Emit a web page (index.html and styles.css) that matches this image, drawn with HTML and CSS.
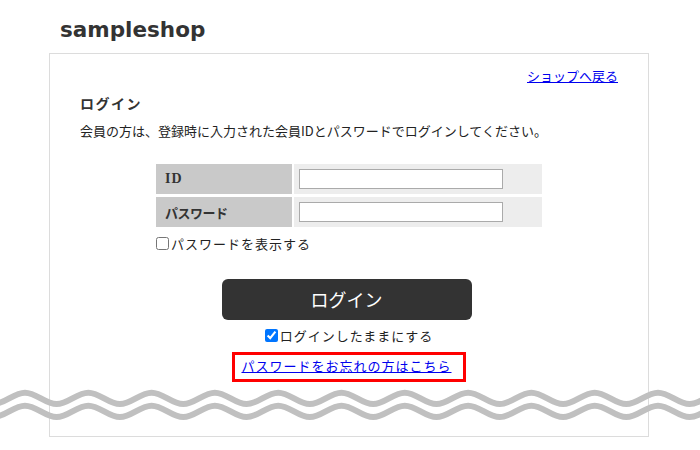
FILE: index.html
```html
<!DOCTYPE html>
<html lang="ja">
<head>
<meta charset="utf-8">
<title>sampleshop ログイン</title>
<link rel="stylesheet" href="styles.css">
</head>
<body>
<div class="page">
  <h1 class="site-title">sampleshop</h1>
  <div class="panel">
    <div class="back"><a href="#">ショップへ戻る</a></div>
    <h2 class="heading">ログイン</h2>
    <p class="lead">会員の方は、登録時に入力された会員IDとパスワードでログインしてください。</p>
    <div class="form">
      <div class="grid">
        <div class="label"><span class="latin">ID</span></div>
        <div class="field"><input type="text"></div>
        <div class="label"><span class="kana">パスワード</span></div>
        <div class="field"><input type="password"></div>
      </div>
      <label class="check"><input type="checkbox"><span>パスワードを表示する</span></label>
    </div>
    <div class="actions">
      <button class="submit" type="button">ログイン</button>
      <label class="check remember"><input type="checkbox" checked><span>ログインしたままにする</span></label>
      <a class="forgot" href="#">パスワードをお忘れの方はこちら</a>
    </div>
  </div>
</div>
<svg class="waves" width="700" height="50" viewBox="0 0 700 50" aria-hidden="true">
  <path fill="none" stroke="#c0c0c0" stroke-width="6" d="M-38.3 12.7 c11.4 0 20.25 11.3 31.65 11.3 s20.25 -11.3 31.65 -11.3 s20.25 11.3 31.65 11.3 s20.25 -11.3 31.65 -11.3 s20.25 11.3 31.65 11.3 s20.25 -11.3 31.65 -11.3 s20.25 11.3 31.65 11.3 s20.25 -11.3 31.65 -11.3 s20.25 11.3 31.65 11.3 s20.25 -11.3 31.65 -11.3 s20.25 11.3 31.65 11.3 s20.25 -11.3 31.65 -11.3 s20.25 11.3 31.65 11.3 s20.25 -11.3 31.65 -11.3 s20.25 11.3 31.65 11.3 s20.25 -11.3 31.65 -11.3 s20.25 11.3 31.65 11.3 s20.25 -11.3 31.65 -11.3 s20.25 11.3 31.65 11.3 s20.25 -11.3 31.65 -11.3 s20.25 11.3 31.65 11.3 s20.25 -11.3 31.65 -11.3 s20.25 11.3 31.65 11.3 s20.25 -11.3 31.65 -11.3 s20.25 11.3 31.65 11.3"/>
  <path fill="none" stroke="#c0c0c0" stroke-width="6" d="M-38.3 25.7 c11.4 0 20.25 11.3 31.65 11.3 s20.25 -11.3 31.65 -11.3 s20.25 11.3 31.65 11.3 s20.25 -11.3 31.65 -11.3 s20.25 11.3 31.65 11.3 s20.25 -11.3 31.65 -11.3 s20.25 11.3 31.65 11.3 s20.25 -11.3 31.65 -11.3 s20.25 11.3 31.65 11.3 s20.25 -11.3 31.65 -11.3 s20.25 11.3 31.65 11.3 s20.25 -11.3 31.65 -11.3 s20.25 11.3 31.65 11.3 s20.25 -11.3 31.65 -11.3 s20.25 11.3 31.65 11.3 s20.25 -11.3 31.65 -11.3 s20.25 11.3 31.65 11.3 s20.25 -11.3 31.65 -11.3 s20.25 11.3 31.65 11.3 s20.25 -11.3 31.65 -11.3 s20.25 11.3 31.65 11.3 s20.25 -11.3 31.65 -11.3 s20.25 11.3 31.65 11.3 s20.25 -11.3 31.65 -11.3 s20.25 11.3 31.65 11.3"/>
</svg>
</body>
</html>
```

FILE: styles.css
```css
html, body {
  margin: 0;
  padding: 0;
  background: #fff;
}
body {
  font-family: "Noto Sans CJK JP", "Noto Sans", sans-serif;
  font-size: 13px;
  color: #333;
}
.page {
  width: 600px;
  margin-left: 49px;
}
.site-title {
  margin: 17px 0 10px;
  padding-left: 11px;
  font-family: "DejaVu Sans", sans-serif;
  font-weight: bold;
  font-size: 21.5px;
  line-height: 26px;
  color: #333;
}
.panel {
  box-sizing: border-box;
  height: 384px;
  border: 1px solid #dcdcdc;
  padding: 12px 30px 0;
}
.back {
  text-align: right;
  line-height: 20px;
}
.back a {
  color: #0000ee;
}
.heading {
  margin: 7px 0 0;
  font-size: 14px;
  font-weight: bold;
  line-height: 20px;
  letter-spacing: 1.5px;
}
.lead {
  margin: 8px 0 0;
  line-height: 20px;
  color: #222;
}
.form {
  width: 386px;
  margin: 23px auto 0;
}
.grid {
  display: grid;
  grid-template-columns: 136px 248px;
  grid-auto-rows: 30px;
  column-gap: 2px;
  row-gap: 3px;
}
.label {
  display: flex;
  align-items: center;
  padding-left: 9px;
  background: #c9c9c9;
  font-family: "Liberation Serif", "Noto Sans CJK JP", serif;
  font-weight: bold;
  color: #333;
}
.latin {
  font-size: 14px;
  letter-spacing: 1px;
}
.kana {
  font-family: "Noto Sans CJK JP", sans-serif;
  font-size: 13px;
  letter-spacing: -0.5px;
}
.field {
  display: flex;
  align-items: center;
  padding-left: 5px;
  background: #ededed;
}
.field input {
  box-sizing: border-box;
  width: 204px;
  height: 20px;
  margin: 0;
  border: 1px solid #aaa;
  background: #fff;
  padding: 0 3px;
}
.check {
  display: flex;
  align-items: center;
  height: 20px;
  margin-top: 6px;
  letter-spacing: 1px;
  color: #222;
}
.check input {
  width: 13px;
  height: 13px;
  margin: 0 2px 0 0;
}
.actions {
  display: flex;
  flex-direction: column;
  align-items: center;
  margin-top: 26px;
}
.submit {
  width: 250px;
  height: 41px;
  margin: 0 5px 0 0;
  border: none;
  border-radius: 6px;
  background: #333;
  color: #fff;
  font-family: "Noto Sans CJK JP", sans-serif;
  font-size: 18px;
  line-height: 41px;
  padding: 0;
}
.remember {
  margin-top: 5px;
}
.forgot {
  display: block;
  margin-top: 7px;
  padding: 1px 11px 3px 6px;
  border: 3px solid #ff0000;
  line-height: 20px;
  letter-spacing: 1px;
  color: #0000ee;
}
.waves {
  position: absolute;
  left: 0;
  top: 380px;
  pointer-events: none;
}
```
